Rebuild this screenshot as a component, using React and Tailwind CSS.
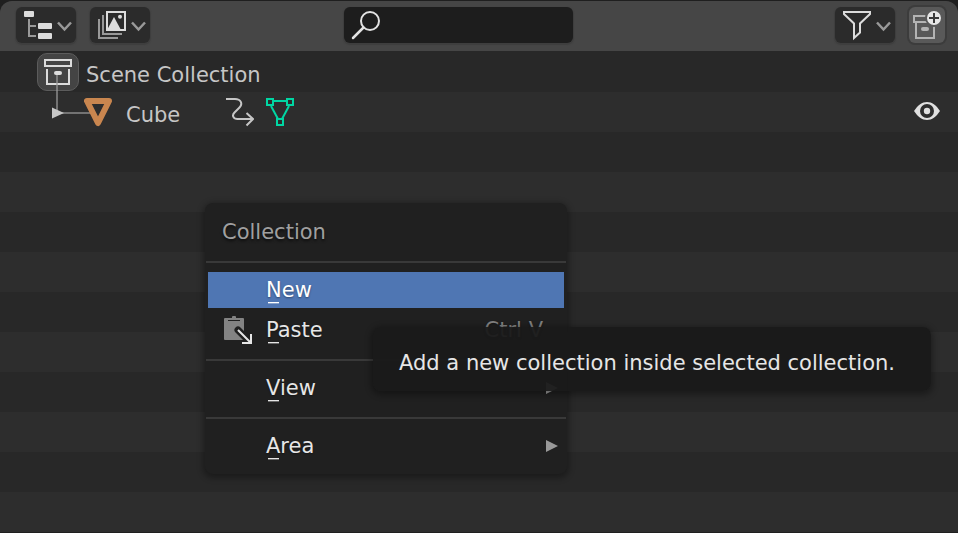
import React from "react";

function Chevron() {
  return <path d="M42 15.500l6.500 7 6.500-7" fill="none" stroke="#999999" strokeWidth="2.500" />;
}

function ToolButton({ label, children }) {
  return (
    <button
      type="button"
      aria-label={label}
      className="h-9 w-[60px] shrink-0 rounded-md bg-[#2b2b2b] shadow-[0_1px_1px_1px_#3e3e3e]"
    >
      <svg width="60" height="36" viewBox="0 0 60 36">
        {children}
        <Chevron />
      </svg>
    </button>
  );
}

function Header() {
  return (
    <header className="flex h-[50px] items-center bg-[#464646] pr-[13px] pl-4 pb-1 pt-[2px]">
      <div className="flex gap-[14px]">
        <ToolButton label="Editor type">
          <path d="M13 12v17h7M13 19h7" fill="none" stroke="#999999" strokeWidth="2" />
          <rect x="8" y="4" width="10" height="6" rx="1" fill="#dcdcdc" />
          <rect x="22" y="16" width="14" height="6" rx="1" fill="#dcdcdc" />
          <rect x="22" y="26" width="14" height="6" rx="1" fill="#dcdcdc" />
        </ToolButton>
        <ToolButton label="Display mode">
          <path d="M13 8v19h19M9 12v19h19" fill="none" stroke="#999999" strokeWidth="2" />
          <rect x="17" y="5" width="18" height="18" fill="none" stroke="#dcdcdc" strokeWidth="2" />
          <path d="M17 23l7-13 7 13z" fill="#dcdcdc" />
          <circle cx="30" cy="9.7" r="2" fill="#dcdcdc" />
        </ToolButton>
      </div>
      <div className="flex-[17]" />
      <label className="flex h-9 w-[229px] items-center rounded-md bg-[#1d1d1d] shadow-[0_1px_1px_1px_#3e3e3e]">
        <svg width="40" height="36" viewBox="0 0 40 36" className="shrink-0">
          <circle cx="26" cy="14" r="9" fill="none" stroke="#e2e2e2" strokeWidth="2" />
          <path d="M19.500 20.500L9 31" stroke="#e2e2e2" strokeWidth="2.500" strokeLinecap="round" />
        </svg>
        <input
          type="text"
          aria-label="Search"
          className="min-w-0 flex-1 bg-transparent text-[#e6e6e6] outline-none"
        />
      </label>
      <div className="flex-[23]" />
      <div className="flex gap-[14px]">
        <ToolButton label="Filter">
          <path
            d="M9 5h26v2l-10 9.500v9l-6 5.500V16.500L9 7z"
            fill="none"
            stroke="#dcdcdc"
            strokeWidth="2"
          />
        </ToolButton>
        <button
          type="button"
          aria-label="New collection"
          className="size-9 shrink-0 rounded-md bg-[#595959] shadow-[0_0_0_2px_#3c3c3c]"
        >
          <svg width="36" height="36" viewBox="0 0 36 36">
            <path d="M17 9H5v6h13M7 16v15h18V19" fill="none" stroke="#b4b4b4" strokeWidth="2" />
            <path d="M5 15h15" stroke="#b4b4b4" strokeWidth="2" />
            <rect x="12" y="20" width="8" height="4" rx="2" fill="#b4b4b4" />
            <circle cx="25" cy="11" r="8" fill="#e6e6e6" stroke="#595959" strokeWidth="2" />
            <path d="M25 6v10M20 11h10" stroke="#3a3a3a" strokeWidth="2" />
          </svg>
        </button>
      </div>
    </header>
  );
}

function SceneRow() {
  return (
    <li className="flex h-10 items-center pl-[37px]">
      <span className="flex h-[38px] w-[42px] items-center justify-center rounded-[10px] border border-[#5c5c5c] bg-[#444444]">
        <svg width="28" height="28" viewBox="0 0 28 28">
          <rect x="1" y="2" width="26" height="6" fill="none" stroke="#dcdcdc" strokeWidth="2" />
          <path d="M3 11v15h22V11" fill="none" stroke="#dcdcdc" strokeWidth="2" />
          <rect x="10" y="13" width="8" height="4" rx="2" fill="#dcdcdc" />
        </svg>
      </span>
      <span className="ml-[7px] pt-[6px]">Scene Collection</span>
    </li>
  );
}

function CubeRow() {
  return (
    <li className="relative flex h-10 items-center bg-[#2d2d2d] pr-[18px] pl-[84px]">
      <svg
        className="absolute -top-5 left-[50px]"
        width="50"
        height="50"
        viewBox="50 72 50 50"
      >
        <path d="M57 75v38h36" fill="none" stroke="#999999" strokeOpacity="0.65" strokeWidth="2" />
        <path d="M52 107.500L64 113l-12 5.500z" fill="#c6c6c6" />
      </svg>
      <svg width="28" height="30" viewBox="84 97 28 30" className="relative">
        <path
          d="M87 101h22L98 123z"
          fill="none"
          stroke="#c9864f"
          strokeWidth="6"
          strokeLinejoin="round"
        />
      </svg>
      <span className="ml-[14px] w-[100px] pt-[6px]">Cube</span>
      <svg width="28" height="30" viewBox="226 97 28 30">
        <path
          d="M226 99h9c6 0 8 5 4.500 8.500l-5 5c-3 3-1 6.500 3 6.500H253M246.500 113l6.500 6-6.500 6.500"
          fill="none"
          stroke="#c6c6c6"
          strokeWidth="2"
        />
      </svg>
      <svg width="28" height="30" viewBox="266 97 28 30" className="ml-3">
        <path
          d="M267 99h6v6h-6zM287 99h6v6h-6zM277 119h6v6h-6zM273 101h14M271 106l7 13M289 106l-7 13"
          fill="none"
          stroke="#00d6a3"
          strokeWidth="2"
        />
      </svg>
      <button type="button" aria-label="Hide in viewport" className="ml-auto">
        <svg width="26" height="20" viewBox="0 0 26 20" className="block">
          <path d="M0 9C4 3 8 0 13 0s9 3 13 9c-4 6-8 9-13 9S4 15 0 9z" fill="#e0e0e0" />
          <circle cx="13" cy="9" r="7" fill="#2d2d2d" />
          <circle cx="13" cy="9" r="3.200" fill="#e0e0e0" />
        </svg>
      </button>
    </li>
  );
}

function Separator() {
  return <div role="separator" className="mx-px h-[2px] bg-[#393939]" />;
}

function MenuItem({ text, icon, shortcut, submenu, active }) {
  return (
    <button
      type="button"
      role="menuitem"
      className={
        "mx-[3px] flex h-9 items-center text-left [text-shadow:0_1px_2px_#00000066] " +
        (active ? "bg-[#4f76b3] text-white" : "text-[#e6e6e6]")
      }
    >
      <span className="flex w-[58px] pl-4">{icon}</span>
      <span className="relative">
        {text}
        <span className="absolute bottom-px left-[2px] h-px w-[11px] bg-current shadow-[0_1px_0_#ffffff55]" />
      </span>
      {shortcut && <span className="ml-auto pr-[21px] text-[#808080]">{shortcut}</span>}
      {submenu && (
        <svg width="12" height="12" viewBox="0 0 12 12" className="mr-[6px] ml-auto">
          <path d="M0 0l12 6-12 6z" fill="#999999" />
        </svg>
      )}
    </button>
  );
}

function PasteIcon() {
  return (
    <svg width="30" height="30" viewBox="224 315 30 30">
      <path
        d="M224 319q0-1 1-1h3v3h12v-3h3q1 0 1 1v21h-19q-1 0-1-1z"
        fill="#838383"
      />
      <path d="M228 318h4v-1q0-1 1-1h2q1 0 1 1v1h4v2h-12z" fill="#838383" />
      <path d="M238 330l13 13" stroke="#202020" strokeWidth="7" strokeLinecap="round" />
      <path d="M238 330l13 13M251 334v9h-9" fill="none" stroke="#e6e6e6" strokeWidth="2" />
    </svg>
  );
}

function ContextMenu() {
  return (
    <div
      role="menu"
      aria-label="Collection"
      className="absolute top-[203px] left-[205px] flex w-[362px] flex-col rounded-lg bg-[#202020] pb-[10px] shadow-[0_2px_6px_2px_#00000055]"
    >
      <div className="flex h-[58px] items-center pl-[17px] text-[#a0a0a0] [text-shadow:0_2px_3px_#000000aa]">
        Collection
      </div>
      <Separator />
      <div className="mt-[9px] mb-[11px] flex flex-col gap-1">
        <MenuItem text="New" active />
        <MenuItem text="Paste" icon={<PasteIcon />} shortcut="Ctrl V" />
      </div>
      <Separator />
      <div className="mt-[9px] mb-[11px] flex flex-col">
        <MenuItem text="View" submenu />
      </div>
      <Separator />
      <div className="mt-[9px] flex flex-col">
        <MenuItem text="Area" submenu />
      </div>
    </div>
  );
}

export default function App() {
  return (
    <div className="relative min-h-screen overflow-hidden bg-[#1f1f1f] py-px font-['DejaVu_Sans',sans-serif] text-[21px] leading-7 text-[#c6c6c6]">
      <main className="overflow-hidden rounded-t-xl bg-[#282828]">
        <Header />
        <ul className="pt-px">
          <SceneRow />
          <CubeRow />
          {Array.from({ length: 10 }, (_, i) => (
            <li key={i} className="h-10 even:bg-[#2d2d2d]" />
          ))}
        </ul>
      </main>
      <ContextMenu />
      <div
        role="tooltip"
        className="absolute top-[327px] left-[373px] flex h-16 items-center rounded-lg bg-[#191919]/94 pt-2 pr-9 pl-[26px] whitespace-nowrap text-[#e6e6e6] shadow-[0_2px_6px_2px_#00000055]"
      >
        Add a new collection inside selected collection.
      </div>
    </div>
  );
}
